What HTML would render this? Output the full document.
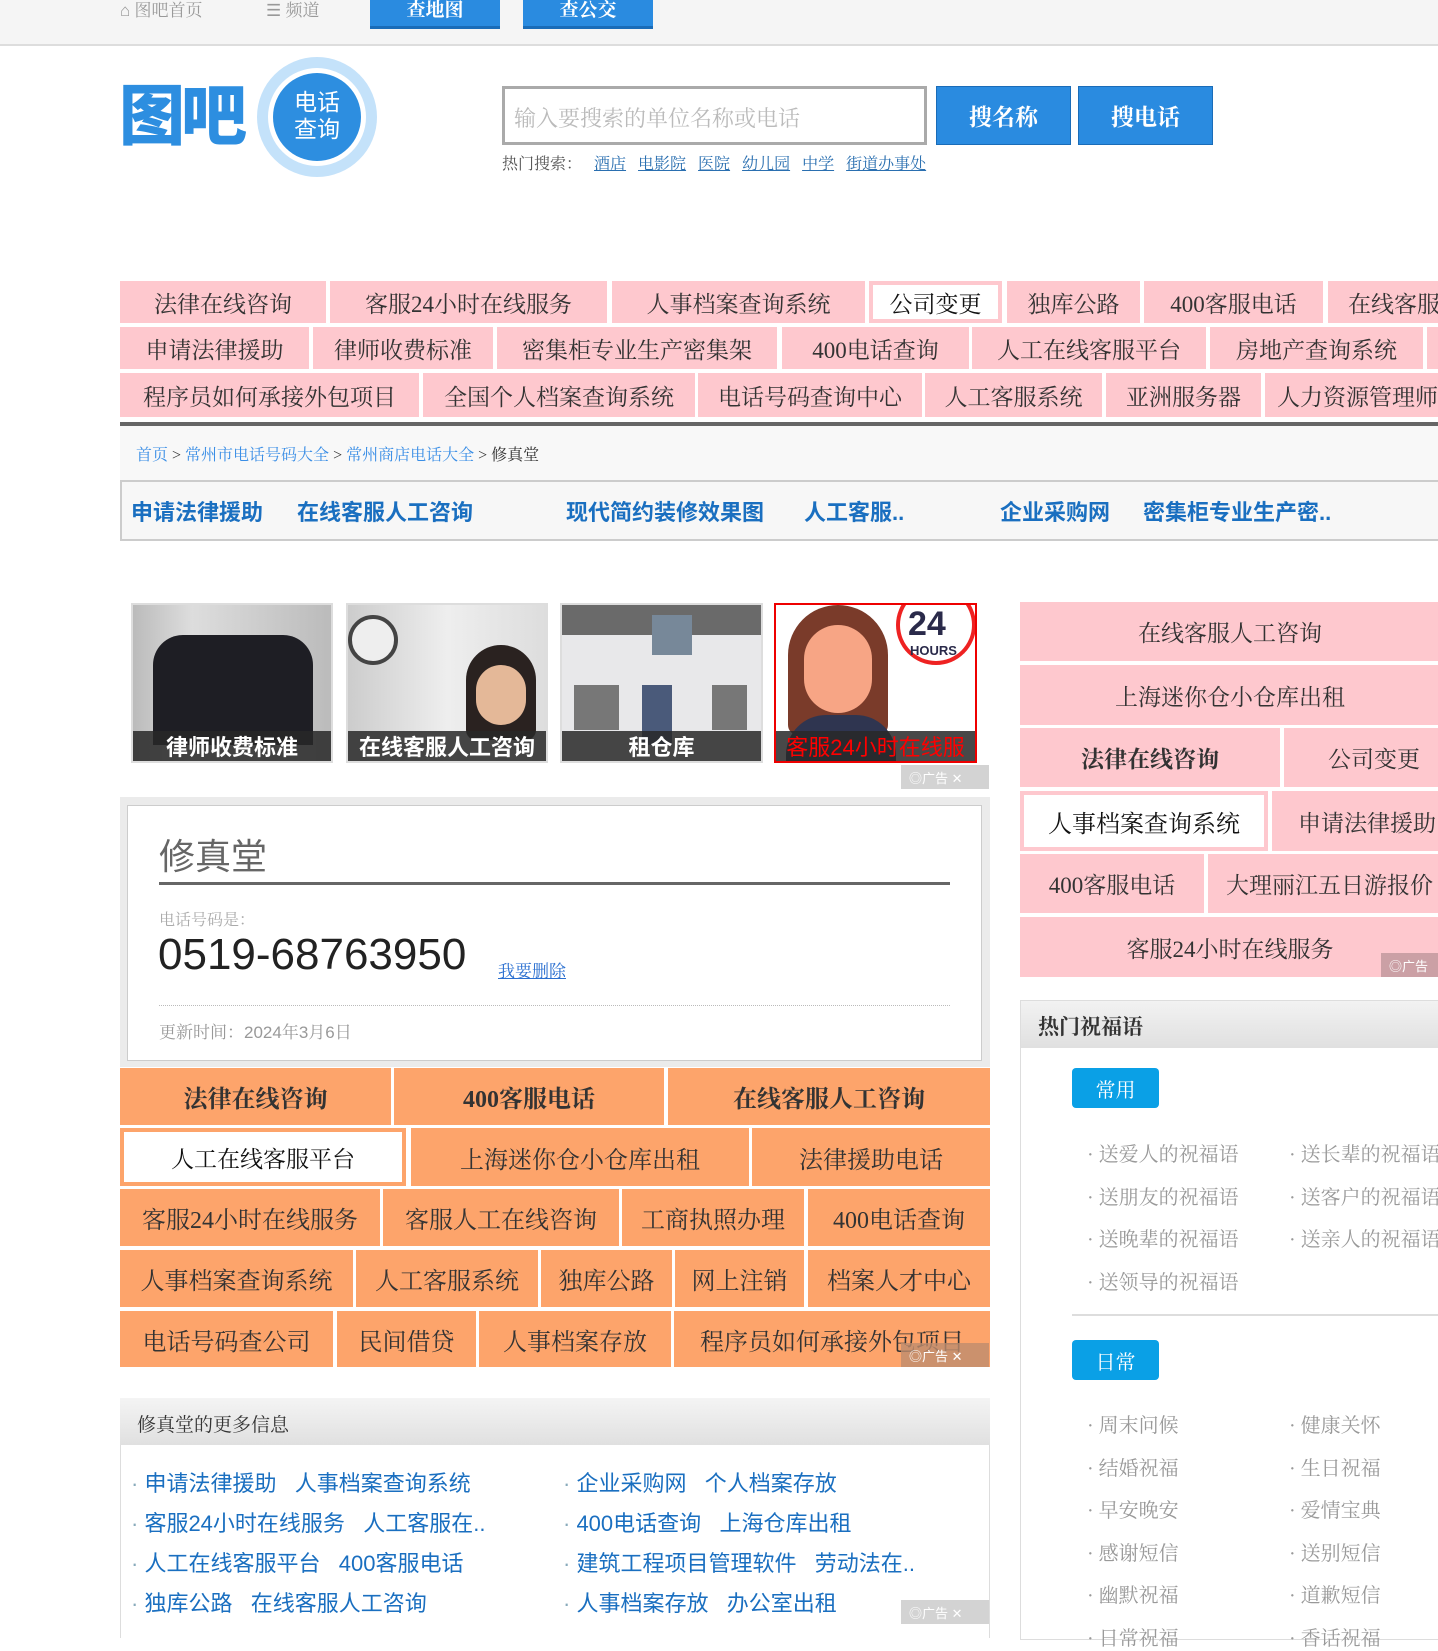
<!DOCTYPE html>
<html><head><meta charset="utf-8">
<style>
*{margin:0;padding:0;box-sizing:border-box}
body{width:1438px;height:1634px;overflow:hidden;background:#fff;position:relative;font-family:"Liberation Serif","Noto Serif CJK SC",serif;color:#333}
.a{position:absolute}
.c{position:absolute;display:flex;align-items:center;justify-content:center;white-space:nowrap;overflow:hidden;font-size:23px;color:#333}
.pk{background:#fec8ce}
.wh{background:#fff;border:4px solid #fec8ce;color:#111}
.or{background:#fda46b;font-size:24px}
.owh{background:#fff;border:4px solid #fda46b;color:#111}
.lb{font-family:"Liberation Sans","Noto Sans CJK SC",sans-serif;font-weight:bold;color:#1a6fc0;font-size:22px}
.ad{position:absolute;width:88px;height:24px;background:rgba(200,200,200,.8);color:#fff;font-size:13px;font-family:"Liberation Sans","Noto Sans CJK SC",sans-serif;display:flex;align-items:center;padding-left:8px}
.li{position:absolute;font-size:20px;color:#999;white-space:nowrap}
.ml{position:absolute;font-family:"Liberation Sans","Noto Sans CJK SC",sans-serif;font-size:22px;color:#1a6fc0;white-space:nowrap}
</style></head><body>
<!-- top bar -->
<div class="a" style="left:0;top:0;width:1438px;height:46px;background:#f5f5f5;border-bottom:2px solid #ddd"></div>
<div class="a" style="left:120px;top:-4px;font-size:17px;color:#999">⌂ 图吧首页</div>
<div class="a" style="left:266px;top:-4px;font-size:17px;color:#999">☰ 频道</div>
<div class="c" style="left:370px;top:-10px;width:130px;height:39px;background:#2a8be0;color:#fff;font-size:19px;font-weight:bold;border-bottom:3px solid #1a6cb8">查地图</div>
<div class="c" style="left:523px;top:-10px;width:130px;height:39px;background:#2a8be0;color:#fff;font-size:19px;font-weight:bold;border-bottom:3px solid #1a6cb8">查公交</div>
<!-- logo -->
<div class="a" style="left:119px;top:78px;font-family:'Liberation Sans','Noto Sans CJK SC',sans-serif;font-weight:900;font-size:66px;line-height:76px;color:#2d8ee0;letter-spacing:-4px">图吧</div>
<div class="a" style="left:257px;top:57px;width:120px;height:120px;border-radius:50%;background:#c4e2fa"></div>
<div class="a" style="left:268px;top:68px;width:98px;height:98px;border-radius:50%;background:#fff"></div>
<div class="a" style="left:273px;top:73px;width:88px;height:88px;border-radius:50%;background:#2d8ee0;color:#fff;font-family:'Liberation Sans','Noto Sans CJK SC',sans-serif;font-size:23px;line-height:27px;text-align:center;padding-top:16px">电话<br>查询</div>
<!-- search -->
<div class="a" style="left:502px;top:86px;width:425px;height:59px;border:3px solid #aaa;background:#fff;font-size:22px;color:#bbb;padding:13px 9px">输入要搜索的单位名称或电话</div>
<div class="c" style="left:936px;top:86px;width:135px;height:59px;background:#2a8be0;color:#fff;font-weight:bold;border:1px solid #1a6cb8">搜名称</div>
<div class="c" style="left:1078px;top:86px;width:135px;height:59px;background:#2a8be0;color:#fff;font-weight:bold;border:1px solid #1a6cb8">搜电话</div>
<div class="a" style="left:502px;top:151px;font-size:16px;color:#555;word-spacing:8px">热门搜索： <u style="color:#2a6fb0">酒店</u> <u style="color:#2a6fb0">电影院</u> <u style="color:#2a6fb0">医院</u> <u style="color:#2a6fb0">幼儿园</u> <u style="color:#2a6fb0">中学</u> <u style="color:#2a6fb0">街道办事处</u></div>
<!-- pink nav -->
<div class="c pk" style="left:120px;top:281px;width:206px;height:42px">法律在线咨询</div>
<div class="c pk" style="left:330px;top:281px;width:277px;height:42px">客服24小时在线服务</div>
<div class="c pk" style="left:612px;top:281px;width:253px;height:42px">人事档案查询系统</div>
<div class="c wh" style="left:869px;top:281px;width:133px;height:42px">公司变更</div>
<div class="c pk" style="left:1007px;top:281px;width:133px;height:42px">独库公路</div>
<div class="c pk" style="left:1144px;top:281px;width:179px;height:42px">400客服电话</div>
<div class="c pk" style="left:1328px;top:281px;width:140px;height:42px;justify-content:flex-start;padding-left:20px">在线客服人工</div>
<div class="c pk" style="left:120px;top:327px;width:189px;height:42px">申请法律援助</div>
<div class="c pk" style="left:313px;top:327px;width:180px;height:42px">律师收费标准</div>
<div class="c pk" style="left:497px;top:327px;width:280px;height:42px">密集柜专业生产密集架</div>
<div class="c pk" style="left:782px;top:327px;width:187px;height:42px">400电话查询</div>
<div class="c pk" style="left:972px;top:327px;width:234px;height:42px">人工在线客服平台</div>
<div class="c pk" style="left:1210px;top:327px;width:213px;height:42px">房地产查询系统</div>
<div class="c pk" style="left:1427px;top:327px;width:20px;height:42px"></div>
<div class="c pk" style="left:120px;top:373px;width:299px;height:44px">程序员如何承接外包项目</div>
<div class="c pk" style="left:423px;top:373px;width:272px;height:44px">全国个人档案查询系统</div>
<div class="c pk" style="left:698px;top:373px;width:224px;height:44px">电话号码查询中心</div>
<div class="c pk" style="left:925px;top:373px;width:177px;height:44px">人工客服系统</div>
<div class="c pk" style="left:1106px;top:373px;width:155px;height:44px">亚洲服务器</div>
<div class="c pk" style="left:1265px;top:373px;width:200px;height:44px;justify-content:flex-start;padding-left:12px">人力资源管理师</div>
<div class="a" style="left:120px;top:422px;width:1318px;height:4px;background:#666"></div>
<!-- breadcrumb -->
<div class="a" style="left:120px;top:426px;width:1318px;height:54px;background:#f8f8f8"></div>
<div class="a" style="left:136px;top:442px;font-size:16px;color:#333"><span style="color:#3a8ee6">首页</span> &gt; <span style="color:#3a8ee6">常州市电话号码大全</span> &gt; <span style="color:#3a8ee6">常州商店电话大全</span> &gt; 修真堂</div>
<!-- link bar -->
<div class="a" style="left:120px;top:480px;width:1330px;height:61px;background:#f7f7f7;border:2px solid #ccc;border-right:none"></div>
<div class="a lb" style="left:131px;top:495px">申请法律援助</div>
<div class="a lb" style="left:297px;top:495px">在线客服人工咨询</div>
<div class="a lb" style="left:566px;top:495px">现代简约装修效果图</div>
<div class="a lb" style="left:804px;top:495px">人工客服..</div>
<div class="a lb" style="left:1000px;top:495px">企业采购网</div>
<div class="a lb" style="left:1143px;top:495px">密集柜专业生产密..</div>
<!-- images -->
<div class="a" style="left:131px;top:603px;width:202px;height:160px;border:2px solid #ddd;background:linear-gradient(90deg,#bbb,#ddd 30%,#bbb);overflow:hidden">
 <div class="a" style="left:20px;top:30px;width:160px;height:110px;background:#1e1e24;border-radius:30px 30px 0 0"></div>
 <div class="c" style="left:0;bottom:0;width:100%;height:30px;background:rgba(40,40,40,.85);color:#fff;font-size:22px;font-family:'Liberation Sans','Noto Sans CJK SC',sans-serif;font-weight:bold">律师收费标准</div></div>
<div class="a" style="left:346px;top:603px;width:202px;height:160px;border:2px solid #ddd;background:linear-gradient(90deg,#ccc,#eee 50%,#ddd);overflow:hidden">
 <div class="a" style="left:0;top:10px;width:50px;height:50px;border-radius:50%;border:4px solid #444;background:#eee"></div>
 <div class="a" style="left:118px;top:40px;width:70px;height:95px;border-radius:35px 35px 10px 10px;background:#2a2220"></div>
 <div class="a" style="left:128px;top:60px;width:50px;height:60px;border-radius:25px;background:#e4b898"></div>
 <div class="c" style="left:0;bottom:0;width:100%;height:30px;background:rgba(40,40,40,.85);color:#fff;font-size:22px;font-family:'Liberation Sans','Noto Sans CJK SC',sans-serif;font-weight:bold">在线客服人工咨询</div></div>
<div class="a" style="left:560px;top:603px;width:203px;height:160px;border:2px solid #ddd;background:#e8e8ea;overflow:hidden">
 <div class="a" style="left:0;top:0;width:100%;height:30px;background:#6a6a6a"></div>
 <div class="a" style="left:90px;top:10px;width:40px;height:40px;background:#789"></div>
 <div class="a" style="left:12px;top:80px;width:45px;height:45px;background:#777"></div>
 <div class="a" style="left:80px;top:80px;width:30px;height:60px;background:#4a5a7a"></div>
 <div class="a" style="left:150px;top:80px;width:35px;height:45px;background:#777"></div>
 <div class="c" style="left:0;bottom:0;width:100%;height:30px;background:rgba(40,40,40,.85);color:#fff;font-size:22px;font-family:'Liberation Sans','Noto Sans CJK SC',sans-serif;font-weight:bold">租仓库</div></div>
<div class="a" style="left:774px;top:603px;width:203px;height:160px;border:2px solid #e00;background:#fff;overflow:hidden">
 <div class="a" style="left:12px;top:0;width:100px;height:130px;border-radius:50px 50px 10px 10px;background:#7a3b2a"></div>
 <div class="a" style="left:28px;top:20px;width:68px;height:88px;border-radius:34px;background:#f7a585"></div>
 <div class="a" style="left:10px;top:110px;width:110px;height:60px;border-radius:40px 40px 0 0;background:#2f3550"></div>
 <div class="a" style="left:120px;top:-20px;width:80px;height:80px;border-radius:50%;border:4px solid #e22;border-top-color:transparent"></div>
 <div class="a" style="left:132px;top:0;font-family:'Liberation Sans',sans-serif;font-weight:bold;font-size:34px;color:#2a2a4a">24</div>
 <div class="a" style="left:134px;top:38px;font-family:'Liberation Sans',sans-serif;font-weight:bold;font-size:13px;color:#2a2a4a">HOURS</div>
 <div class="c" style="left:0;bottom:0;width:100%;height:30px;background:rgba(40,40,40,.85);color:#f00;font-size:22px;font-family:'Liberation Sans','Noto Sans CJK SC',sans-serif">客服24小时在线服</div></div>
<div class="ad" style="left:901px;top:765px">◎广告 ✕</div>
<!-- info box -->
<div class="a" style="left:120px;top:797px;width:870px;height:270px;background:#ebebeb"></div>
<div class="a" style="left:127px;top:805px;width:855px;height:256px;background:#fff;border:1px solid #ccc"></div>
<div class="a" style="left:159px;top:828px;font-family:'Liberation Sans','Noto Sans CJK SC',sans-serif;font-size:36px;color:#666">修真堂</div>
<div class="a" style="left:159px;top:882px;width:791px;height:3px;background:#666"></div>
<div class="a" style="left:159px;top:907px;font-size:16px;color:#aaa">电话号码是：</div>
<div class="a" style="left:158px;top:930px;font-family:'Liberation Sans',sans-serif;font-size:44px;color:#222">0519-68763950</div>
<div class="a" style="left:498px;top:957px;font-size:17px;color:#2a6fd0;text-decoration:underline">我要删除</div>
<div class="a" style="left:159px;top:1005px;width:791px;border-top:1px dotted #bbb"></div>
<div class="a" style="left:159px;top:1018px;font-size:17px;color:#999">更新时间：<span style="font-family:'Liberation Sans',sans-serif">2024</span>年<span style="font-family:'Liberation Sans',sans-serif">3</span>月<span style="font-family:'Liberation Sans',sans-serif">6</span>日</div>
<!-- orange grid -->
<div class="c or" style="left:120px;top:1068px;width:271px;height:57px;font-weight:bold">法律在线咨询</div>
<div class="c or" style="left:394px;top:1068px;width:270px;height:57px;font-weight:bold">400客服电话</div>
<div class="c or" style="left:668px;top:1068px;width:322px;height:57px;font-weight:bold">在线客服人工咨询</div>
<div class="c owh" style="left:120px;top:1128px;width:286px;height:58px">人工在线客服平台</div>
<div class="c or" style="left:411px;top:1128px;width:338px;height:58px">上海迷你仓小仓库出租</div>
<div class="c or" style="left:752px;top:1128px;width:238px;height:58px">法律援助电话</div>
<div class="c or" style="left:120px;top:1189px;width:260px;height:57px">客服24小时在线服务</div>
<div class="c or" style="left:383px;top:1189px;width:236px;height:57px">客服人工在线咨询</div>
<div class="c or" style="left:622px;top:1189px;width:182px;height:57px">工商执照办理</div>
<div class="c or" style="left:808px;top:1189px;width:182px;height:57px">400电话查询</div>
<div class="c or" style="left:120px;top:1250px;width:233px;height:57px">人事档案查询系统</div>
<div class="c or" style="left:356px;top:1250px;width:182px;height:57px">人工客服系统</div>
<div class="c or" style="left:541px;top:1250px;width:131px;height:57px">独库公路</div>
<div class="c or" style="left:675px;top:1250px;width:129px;height:57px">网上注销</div>
<div class="c or" style="left:808px;top:1250px;width:182px;height:57px">档案人才中心</div>
<div class="c or" style="left:120px;top:1311px;width:213px;height:56px">电话号码查公司</div>
<div class="c or" style="left:337px;top:1311px;width:139px;height:56px">民间借贷</div>
<div class="c or" style="left:479px;top:1311px;width:192px;height:56px">人事档案存放</div>
<div class="c or" style="left:674px;top:1311px;width:316px;height:56px">程序员如何承接外包项目</div>
<div class="ad" style="left:901px;top:1343px;background:rgba(190,140,110,.8)">◎广告 ✕</div>
<!-- more info -->
<div class="a" style="left:120px;top:1398px;width:870px;height:240px;border-left:1px solid #ddd;border-right:1px solid #ddd"></div>
<div class="a" style="left:120px;top:1398px;width:870px;height:47px;background:linear-gradient(#f4f4f4,#e0e0e0);font-size:19px;color:#333;padding:12px 17px">修真堂的更多信息</div>
<div class="ml" style="left:131px;top:1466px"><span style="color:#8ab">·</span> 申请法律援助 &nbsp; 人事档案查询系统</div>
<div class="ml" style="left:131px;top:1506px"><span style="color:#8ab">·</span> 客服24小时在线服务 &nbsp; 人工客服在..</div>
<div class="ml" style="left:131px;top:1546px"><span style="color:#8ab">·</span> 人工在线客服平台 &nbsp; 400客服电话</div>
<div class="ml" style="left:131px;top:1586px"><span style="color:#8ab">·</span> 独库公路 &nbsp; 在线客服人工咨询</div>
<div class="ml" style="left:563px;top:1466px"><span style="color:#8ab">·</span> 企业采购网 &nbsp; 个人档案存放</div>
<div class="ml" style="left:563px;top:1506px"><span style="color:#8ab">·</span> 400电话查询 &nbsp; 上海仓库出租</div>
<div class="ml" style="left:563px;top:1546px"><span style="color:#8ab">·</span> 建筑工程项目管理软件 &nbsp; 劳动法在..</div>
<div class="ml" style="left:563px;top:1586px"><span style="color:#8ab">·</span> 人事档案存放 &nbsp; 办公室出租</div>
<div class="ad" style="left:901px;top:1600px">◎广告 ✕</div>
<!-- right column -->
<div class="c pk" style="left:1020px;top:602px;width:420px;height:59px;padding-right:0">在线客服人工咨询</div>
<div class="c pk" style="left:1020px;top:665px;width:420px;height:60px">上海迷你仓小仓库出租</div>
<div class="c pk" style="left:1020px;top:728px;width:260px;height:59px;font-weight:bold">法律在线咨询</div>
<div class="c pk" style="left:1284px;top:728px;width:160px;height:59px;justify-content:flex-start;padding-left:44px">公司变更</div>
<div class="c wh" style="left:1020px;top:791px;width:248px;height:60px;font-size:24px">人事档案查询系统</div>
<div class="c pk" style="left:1272px;top:791px;width:170px;height:60px;justify-content:flex-start;padding-left:26px">申请法律援助</div>
<div class="c pk" style="left:1020px;top:854px;width:184px;height:59px">400客服电话</div>
<div class="c pk" style="left:1208px;top:854px;width:240px;height:59px;justify-content:flex-start;padding-left:18px">大理丽江五日游报价</div>
<div class="c pk" style="left:1020px;top:917px;width:420px;height:60px">客服24小时在线服务</div>
<div class="ad" style="left:1381px;top:953px;background:rgba(190,150,155,.8)">◎广告</div>
<div class="a" style="left:1020px;top:1000px;width:430px;height:640px;border:1px solid #ddd"></div>
<div class="a" style="left:1021px;top:1001px;width:420px;height:47px;background:linear-gradient(#f2f2f2,#e0e0e0);font-size:21px;font-weight:bold;color:#333;padding:10px 17px">热门祝福语</div>
<div class="c" style="left:1072px;top:1068px;width:87px;height:40px;background:#0aa0e6;color:#fff;font-size:20px;border-radius:4px">常用</div>
<div class="li" style="left:1087px;top:1138px">· 送爱人的祝福语</div>
<div class="li" style="left:1289px;top:1138px">· 送长辈的祝福语</div>
<div class="li" style="left:1087px;top:1181px">· 送朋友的祝福语</div>
<div class="li" style="left:1289px;top:1181px">· 送客户的祝福语</div>
<div class="li" style="left:1087px;top:1223px">· 送晚辈的祝福语</div>
<div class="li" style="left:1289px;top:1223px">· 送亲人的祝福语</div>
<div class="li" style="left:1087px;top:1266px">· 送领导的祝福语</div>
<div class="a" style="left:1072px;top:1314px;width:370px;height:2px;background:#ddd"></div>
<div class="c" style="left:1072px;top:1340px;width:87px;height:40px;background:#0aa0e6;color:#fff;font-size:20px;border-radius:4px">日常</div>
<div class="li" style="left:1087px;top:1409px">· 周末问候</div><div class="li" style="left:1289px;top:1409px">· 健康关怀</div>
<div class="li" style="left:1087px;top:1452px">· 结婚祝福</div><div class="li" style="left:1289px;top:1452px">· 生日祝福</div>
<div class="li" style="left:1087px;top:1494px">· 早安晚安</div><div class="li" style="left:1289px;top:1494px">· 爱情宝典</div>
<div class="li" style="left:1087px;top:1537px">· 感谢短信</div><div class="li" style="left:1289px;top:1537px">· 送别短信</div>
<div class="li" style="left:1087px;top:1579px">· 幽默祝福</div><div class="li" style="left:1289px;top:1579px">· 道歉短信</div>
<div class="li" style="left:1087px;top:1622px">· 日常祝福</div><div class="li" style="left:1289px;top:1622px">· 香话祝福</div>
</body></html>
